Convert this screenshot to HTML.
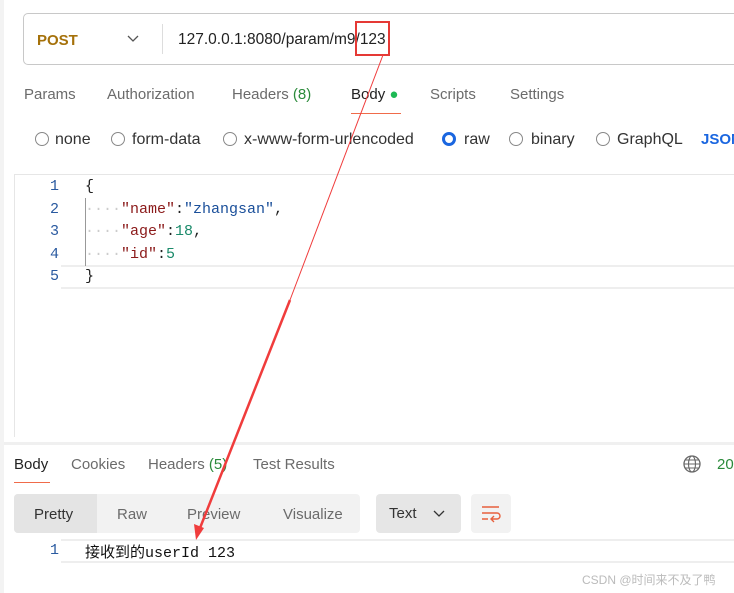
<!DOCTYPE html><html><head><style>
body{margin:0;width:734px;height:593px;background:#fff;font-family:"Liberation Sans",sans-serif;position:relative;overflow:hidden;font-size:15px;color:#6b6b6b}
.a{position:absolute;white-space:nowrap}
.m{font-family:"Liberation Mono","DejaVu Sans Mono",monospace;font-size:15px}
.r{width:12px;height:12px;border:1px solid #888;border-radius:50%;position:absolute}
</style></head><body>
<div class="a" style="left:0;top:0;width:4px;height:593px;background:#f3f3f3"></div>
<div class="a" style="left:23px;top:13px;width:720px;height:50px;border:1px solid #c8c8c8;border-radius:5px"></div>
<div class="a" style="left:37px;top:32px;color:#a5710a;font-weight:bold;font-size:15px">POST</div>
<svg class="a" style="left:127px;top:35px" width="12" height="8"><path d="M1 1l5 5 5-5" stroke="#555" fill="none" stroke-width="1.3"/></svg>
<div class="a" style="left:162px;top:24px;width:1px;height:30px;background:#ddd"></div>
<div class="a" style="left:178px;top:31px;color:#222;font-size:15.5px">127.0.0.1:8080/param/m9/123</div>
<div class="a" style="left:355px;top:21px;width:31px;height:31px;border:2px solid #e53935"></div>
<div class="a" style="left:24px;top:86px">Params</div>
<div class="a" style="left:107px;top:86px">Authorization</div>
<div class="a" style="left:232px;top:86px">Headers <span style="color:#2a8a3a">(8)</span></div>
<div class="a" style="left:351px;top:86px;color:#222">Body <span style="color:#1db954">●</span></div>
<div class="a" style="left:351px;top:113px;width:50px;height:1px;background:#f06b4a"></div>
<div class="a" style="left:430px;top:86px">Scripts</div>
<div class="a" style="left:510px;top:86px">Settings</div>
<div class="r" style="left:35px;top:132px"></div><div class="a" style="left:55px;top:131px;color:#333;font-size:16px">none</div>
<div class="r" style="left:111px;top:132px"></div><div class="a" style="left:132px;top:131px;color:#333;font-size:16px">form-data</div>
<div class="r" style="left:223px;top:132px"></div><div class="a" style="left:244px;top:131px;color:#333;font-size:16px">x-www-form-urlencoded</div>
<div class="r" style="left:442px;top:132px;border:3px solid #1a66e0;width:8px;height:8px"></div><div class="a" style="left:464px;top:131px;color:#333;font-size:16px">raw</div>
<div class="r" style="left:509px;top:132px"></div><div class="a" style="left:531px;top:131px;color:#333;font-size:16px">binary</div>
<div class="r" style="left:596px;top:132px"></div><div class="a" style="left:617px;top:131px;color:#333;font-size:16px">GraphQL</div>
<div class="a" style="left:701px;top:131px;color:#1a66e0;font-weight:bold">JSON</div>
<div class="a" style="left:14px;top:174px;width:720px;height:262px;border-left:1px solid #e6e6e6;border-top:1px solid #e6e6e6"></div>
<div class="a" style="left:61px;top:265px;width:673px;height:20px;border-top:2px solid #eee;border-bottom:2px solid #eee"></div>
<div class="a" style="left:85px;top:198px;width:1px;height:68px;background:#999"></div>
<div class="a m" style="left:50px;top:176px;color:#2a5aa0;line-height:22.5px">1<br>2<br>3<br>4<br>5</div>
<div class="a m" style="left:85px;top:176px;color:#222;line-height:22.5px">{<br><span style="color:#ccc">····</span><span style="color:#8b1a1a">"name"</span>:<span style="color:#1a4f9a">"zhangsan"</span>,<br><span style="color:#ccc">····</span><span style="color:#8b1a1a">"age"</span>:<span style="color:#1a8a6a">18</span>,<br><span style="color:#ccc">····</span><span style="color:#8b1a1a">"id"</span>:<span style="color:#1a8a6a">5</span><br>}</div>
<div class="a" style="left:4px;top:442px;width:730px;height:3px;background:#f0f0f0"></div>
<div class="a" style="left:14px;top:456px;color:#222">Body</div>
<div class="a" style="left:14px;top:482px;width:36px;height:1px;background:#f06b4a"></div>
<div class="a" style="left:71px;top:456px">Cookies</div>
<div class="a" style="left:148px;top:456px">Headers <span style="color:#2a8a3a">(5)</span></div>
<div class="a" style="left:253px;top:456px">Test Results</div>
<svg class="a" style="left:683px;top:455px" width="18" height="18"><circle cx="9" cy="9" r="8" fill="none" stroke="#666" stroke-width="1.3"/><ellipse cx="9" cy="9" rx="3.5" ry="8" fill="none" stroke="#666" stroke-width="1.1"/><path d="M1 9h16M2 5h14M2 13h14" stroke="#666" stroke-width="1"/></svg>
<div class="a" style="left:717px;top:456px;color:#2a8a3a">200</div>
<div class="a" style="left:14px;top:494px;width:346px;height:39px;background:#f2f2f2;border-radius:4px"></div>
<div class="a" style="left:14px;top:494px;width:83px;height:39px;background:#e4e4e4;border-radius:4px 0 0 4px"></div>
<div class="a" style="left:34px;top:506px;color:#333">Pretty</div>
<div class="a" style="left:117px;top:506px">Raw</div>
<div class="a" style="left:187px;top:506px">Preview</div>
<div class="a" style="left:283px;top:506px">Visualize</div>
<div class="a" style="left:376px;top:494px;width:85px;height:39px;background:#e6e6e6;border-radius:4px"></div>
<div class="a" style="left:389px;top:505px;color:#333">Text</div>
<svg class="a" style="left:433px;top:510px" width="12" height="8"><path d="M1 1l5 5 5-5" stroke="#333" fill="none" stroke-width="1.3"/></svg>
<div class="a" style="left:471px;top:494px;width:40px;height:39px;background:#f2f2f2;border-radius:4px"></div>
<svg class="a" style="left:480px;top:504px" width="22" height="20"><path d="M2 3h17M2 9h15a3 3 0 0 1 0 6h-5M2 15h6M14 12l-3 3 3 3" stroke="#e8603c" fill="none" stroke-width="1.4"/></svg>
<div class="a" style="left:61px;top:539px;width:673px;height:20px;border-top:2px solid #eee;border-bottom:2px solid #eee"></div>
<div class="a m" style="left:50px;top:542px;color:#2a5aa0">1</div>
<div class="a m" style="left:85px;top:541px;color:#111;font-family:'Liberation Mono','Noto Sans CJK SC',monospace">接收到的userId 123</div>
<div class="a" style="left:582px;top:571px;font-size:12px;color:#bbb;font-family:'Liberation Sans','Noto Sans CJK SC',sans-serif">CSDN @时间来不及了鸭</div>
<svg class="a" style="left:0;top:0" width="734" height="593"><path d="M383 55L290 300" stroke="#f03c3c" stroke-width="1"/><path d="M290 300L200 528" stroke="#f03c3c" stroke-width="2.5"/><path d="M196 540l-2-16 10 4z" fill="#f03c3c"/></svg>
</body></html>
